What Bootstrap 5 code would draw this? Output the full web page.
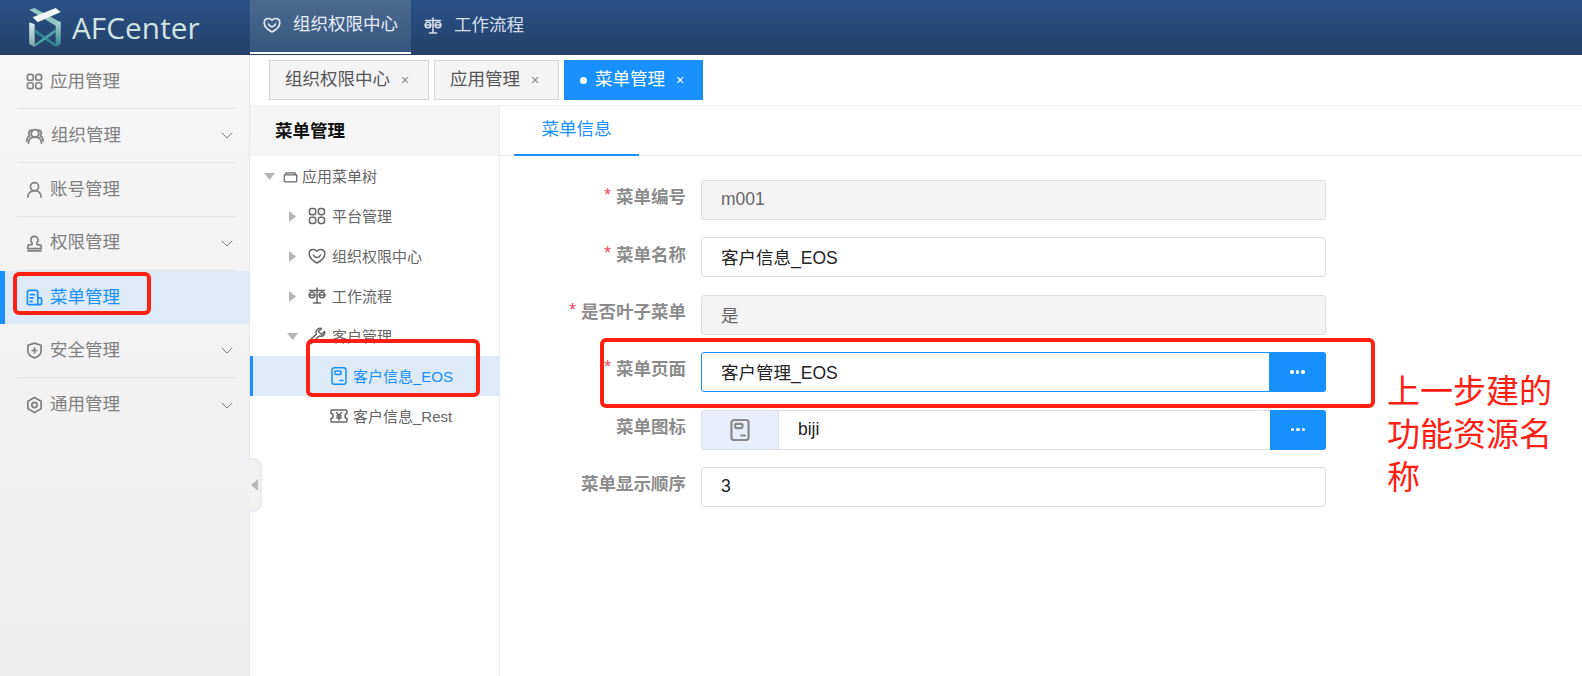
<!DOCTYPE html>
<html lang="zh">
<head>
<meta charset="utf-8">
<title>AFCenter</title>
<link rel="stylesheet" href="https://cdn.jsdelivr.net/npm/bootstrap@5.3.0/dist/css/bootstrap.min.css">
<style>
html,body{height:100%;overflow:hidden}
body{font-family:"Liberation Sans","Noto Sans CJK SC",sans-serif;background:#fff;color:#666}
.af-shell{height:676px;position:relative;overflow:hidden}
.af-top{height:55px;background:linear-gradient(180deg,#2a5289 0%,#254068 100%);color:#d6dfea;flex:none;font-size:17.5px}
.af-brand{width:250px;padding-left:29px;gap:11px;flex:none;height:55px}
.af-brandname{font-family:"Open Sans",sans-serif;font-size:29.7px;color:#d2e4e2;letter-spacing:.1px;line-height:1}
.af-topitem{height:54px;padding:0 13px;gap:12px;color:#d6dfea;text-decoration:none;line-height:1}
.af-topitem.active{width:161px;background:linear-gradient(180deg,#4d6a90,#365781);border-bottom:2px solid #fff;color:#e8eef5;justify-content:center;padding:0 0 3px}
.af-topitem.second{padding:0 0 3px 13px}
.af-main{flex:1;min-height:0}
.af-side{width:250px;flex:none;background:linear-gradient(180deg,#f6f6f6 0%,#eeeeee 100%);border-right:1px solid #e6e6e6;position:relative;padding-top:.4px}
.af-sideitem{height:53.8px;margin:0 13px 0 17px;border-bottom:1px solid #e3e3e3;color:#808080;font-size:17.5px;gap:7px;padding-left:9px;padding-right:3px;line-height:1}
.af-sideitem.last{border-bottom:0}
.af-sideitem.hit{margin:0;padding-left:26px;background:#deeaf7;color:#1890ff;box-shadow:inset 5px 0 0 #1890ff;border-bottom:0}
.af-sideitem .af-chev{margin-left:auto}
.af-work{flex:1;min-width:0}
.af-tabs{height:51px;flex:none;padding:5px 0 0 19px;gap:5px;border-bottom:1px solid #eef0f4}
.af-tab{height:40px;background:#f4f4f5;border:1px solid #d4d6e0;color:#555;font-size:17.5px;padding:0 20px 0 15px;gap:11px;line-height:1}
.af-tab.on{background:#1890ff;border-color:#1890ff;color:#fff;padding-right:19px}
.af-x{font-size:14px;color:#888;line-height:1;width:7px;display:block;text-align:center}
.af-tab.on .af-x{color:#fff}
.af-dot{width:7px;height:7px;background:#fff;border-radius:50%;margin-right:-3px}
.af-panels{flex:1;min-height:0}
.af-tree{width:250px;flex:none;border-right:1px solid #e9ecf2;position:relative;font-size:15px;color:#666}
.af-tree .af-ico{stroke-width:1.5}
.af-treehead{height:50px;background:#f5f5f5;color:#111;font-weight:700;font-size:17.5px;padding-left:25px}
.af-node{height:40px;gap:4px;line-height:1}
.af-l0{padding-left:12px}
.af-l1{padding-left:35px;gap:6px}
.af-l2{padding-left:80px;gap:5px}
.af-node.sel{background:#deeaf7;color:#1890ff;box-shadow:inset 3px 0 0 #1890ff}
.af-arrow{width:14px;display:flex;justify-content:center;flex:none;margin-right:3px}
.af-right{flex:1;min-width:0}
.af-righthead{height:50px;border-bottom:1px solid #e6e9f0;padding-left:14px;flex:none}
.af-righttab{width:125px;height:50px;border-bottom:2px solid #1890ff;color:#1890ff;font-size:17.5px;line-height:1;padding-bottom:1px}
.af-form{padding-top:24px;width:830px}
.af-row{height:40px;margin-bottom:17.4px}
.af-label{width:201px;flex:none;padding:0 15px 4px 0;text-align:right;font-weight:700;color:#8c8c8c;font-size:17.5px;line-height:1;align-self:center}
.af-label i{font-style:normal;color:#f5455c;font-weight:400;margin-right:5px;position:relative;top:-2px}
.af-field{width:625px;flex:none}
.af-field .form-control{height:40px;border-radius:3px;border:1px solid #dcdfe6;padding:0 19px 1px;font-size:17.5px;color:#222;box-shadow:none}
.af-field .form-control[readonly]{background:#f4f4f5;color:#666}
.af-field .form-control.focused{border-color:#1890ff}
.af-more{width:57px;flex:none;background:#1890ff;border:0;border-radius:0 3px 3px 0;color:#fff;padding:0;gap:2px}
.af-more.thin{width:56px}
.af-more span{width:3.5px;height:3.5px;border-radius:50%;background:#fff;display:block}
.af-prefix{width:78px;flex:none;background:#e8eefb;border:1px solid #dcdfe6;border-radius:3px 0 0 3px;color:#8a8a8a}
.af-handle{position:absolute;left:249px;top:458px;width:13px;height:54px;background:#f2f2f2;border:2px solid #e8ebf1;border-left:0;border-radius:0 9px 9px 0;z-index:2}
.af-handle::after{content:"";position:absolute;left:2px;top:19px;border:6.5px solid transparent;border-right:7px solid #b8b8b8;border-left:0}
.af-box{position:absolute;border:4px solid #ff2014;border-radius:6px;z-index:3;pointer-events:none}
.af-box1{left:13px;top:272px;width:138px;height:43px}
.af-box2{left:306px;top:339px;width:174px;height:58px}
.af-box3{left:600px;top:338px;width:775px;height:70px}
.af-note{position:absolute;left:1387px;top:370px;width:170px;color:#ff2014;font-size:33px;line-height:43px;z-index:3;margin:0}
svg{flex:none}
.af-ico{fill:none;stroke:currentColor;stroke-width:1.8;stroke-linecap:round;stroke-linejoin:round}
.af-top .af-ico{stroke-width:1.6}
</style>
</head>
<body>
<svg width="0" height="0" class="position-absolute">
  <defs>
    <symbol id="i-apps" viewBox="0 0 18 18"><rect x="1.500" y="1.500" width="6.200" height="6.200" rx="2.200"/><rect x="10.300" y="1.500" width="6.200" height="6.200" rx="2.600"/><rect x="1.500" y="10.300" width="6.200" height="6.200" rx="2.200"/><rect x="10.300" y="10.300" width="6.200" height="6.200" rx="2.200"/></symbol>
    <symbol id="i-team" viewBox="0 0 18 18"><circle cx="9" cy="6.500" r="3.800"/><path d="M2.500 16c0-3.500 2.600-6 6.500-6s6.500 2.500 6.500 6"/><path d="M5.500 3.200C3.500 3.500 2.500 5 2.800 7c.1.800.5 1.400 1 2-1.800.800-3 2.500-3 5M12.500 3.200c2 .3 3 1.800 2.700 3.800-.1.800-.5 1.400-1 2 1.800.800 3 2.500 3 5"/></symbol>
    <symbol id="i-user" viewBox="0 0 18 18"><circle cx="9" cy="6" r="4.300"/><path d="M2 17c0-4 3-6.800 7-6.800s7 2.800 7 6.800"/></symbol>
    <symbol id="i-stamp" viewBox="0 0 18 18"><path d="M9 1.500c-2.200 0-3.800 1.600-3.800 3.700 0 2 1.400 2.800 1.400 4.300 0 .8-.4 1-1.600 1H3.500c-1 0-1.700.7-1.700 1.700v2.300h14.400v-2.300c0-1-.7-1.700-1.700-1.700H13c-1.200 0-1.600-.2-1.600-1 0-1.500 1.400-2.300 1.400-4.300 0-2.100-1.600-3.700-3.800-3.700z"/><path d="M2 16.800h14"/></symbol>
    <symbol id="i-menu" viewBox="0 0 18 18"><path d="M12.500 16.500H3.200c-1 0-1.700-.7-1.700-1.700V3.200c0-1 .7-1.700 1.700-1.700h7.600c1 0 1.700.7 1.700 1.700z"/><path d="M12.500 9.500h2.300c1 0 1.700.7 1.700 1.700v3.300c0 1.100-.9 2-2 2h-2"/><path d="M4.500 6h4.500M4.500 9.500H7.500M4.500 13h2"/></symbol>
    <symbol id="i-shield" viewBox="0 0 18 18"><path d="M9 1.200l7 2.300v6c0 3.500-3 6-7 7.300-4-1.300-7-3.800-7-7.300v-6z"/><path d="M9 6.500v5M6.500 9h5"/></symbol>
    <symbol id="i-gear" viewBox="0 0 18 18"><path d="M9 1l7 4v8l-7 4-7-4V5z"/><circle cx="9" cy="9" r="2.800"/></symbol>
    <symbol id="i-heart" viewBox="0 0 18 18"><path d="M9 16C4 13.500 1.200 10.500 1.200 6.800 1.200 4 3.200 2.500 5.300 2.500c1.500 0 2.800.6 3.700 1.700.9-1.100 2.200-1.700 3.700-1.700 2.100 0 4.100 1.500 4.100 4.300C16.800 10.500 14 13.500 9 16z"/><path d="M5.500 8c.8 1.800 2 2.600 3.500 2.600S11.700 9.800 12.500 8"/></symbol>
    <symbol id="i-scale" viewBox="0 0 18 18"><path d="M1.500 3.500h15M9 1v14.500M5.500 16h7"/><path d="M1.200 8h5.600a2.800 2.800 0 0 1-5.600 0zM11.200 8h5.600a2.800 2.800 0 0 1-5.600 0z"/><path d="M1.200 8C1.200 6.500 2.500 5 4 5s2.800 1.500 2.800 3M11.200 8c0-1.500 1.300-3 2.800-3s2.800 1.500 2.800 3"/></symbol>
    <symbol id="i-folder" viewBox="0 0 18 18"><path d="M1.500 7h15v7.500c0 .6-.4 1-1 1h-13c-.6 0-1-.4-1-1zM3.500 7V4.500h11V7"/></symbol>
    <symbol id="i-wrench" viewBox="0 0 18 18"><path d="M16.500 4.500l-3 3-3-3 3-3c-2.500-.8-5.500.9-5.500 3.800 0 .7.100 1.300.4 1.800L1.500 13.500c-.7.700-.7 1.700 0 2.400s1.700.7 2.400 0l7.400-6.900c.5.200 1.100.3 1.700.3 2.700 0 4.200-2.500 3.500-4.800z"/></symbol>
    <symbol id="i-note" viewBox="0 0 18 18"><rect x="2" y=".8" width="14" height="16.400" rx="2.300"/><rect x="5" y="4" width="6" height="3.400" rx=".8"/><path d="M10 13.500h3"/></symbol>
    <symbol id="i-yen" viewBox="0 0 18 18"><path d="M2 3h14c.5 0 1 .4 1 1v2.500c-1.200 0-2 1-2 2.500s.8 2.500 2 2.500V14c0 .6-.5 1-1 1H2c-.5 0-1-.4-1-1v-2.500c1.200 0 2-1 2-2.500S2.200 6.500 1 6.500V4c0-.6.5-1 1-1z"/><path d="M6.500 5.500L9 8.500l2.500-3M9 8.500V13M6.800 9h4.400M6.800 11h4.400"/></symbol>
    <linearGradient id="lg1" x1="0" y1="0" x2="0" y2="1"><stop offset="0" stop-color="#dcefe9"/><stop offset="1" stop-color="#7fa9ad"/></linearGradient>
    <linearGradient id="lg2" x1="0" y1="0" x2="0" y2="1"><stop offset="0" stop-color="#a8d8d0"/><stop offset="1" stop-color="#2f7f8d"/></linearGradient>
  </defs>
</svg>
<div class="af-shell d-flex flex-column">
  <header class="af-top d-flex">
    <div class="af-brand d-flex align-items-center">
      <svg width="32" height="39" viewBox="0 0 93 115">
        <path d="M0 5L15 0 93 42 78 52z" fill="#8fc9c2"/>
        <path d="M0 42l16 6v67L0 106z" fill="url(#lg1)"/>
        <path d="M78 46l15-6v66l-15 9z" fill="url(#lg2)"/>
        <path d="M16 62l62 44v9L16 72z" fill="#2f8794"/>
        <path d="M78 62L16 106v9L78 72z" fill="#4aa0a3"/>
        <path d="M10 27L78 0l15 12-68 30z" fill="#eef7f5"/>
      </svg>
      <span class="af-brandname">AFCenter</span>
    </div>
    <nav class="nav flex-nowrap align-items-start">
      <a class="af-topitem active d-flex align-items-center" href="#"><svg class="af-ico" width="18" height="18"><use href="#i-heart"/></svg><span>组织权限中心</span></a>
      <a class="af-topitem second d-flex align-items-center" href="#"><svg class="af-ico" width="18" height="18"><use href="#i-scale"/></svg><span>工作流程</span></a>
    </nav>
  </header>
  <div class="af-main d-flex">
    <aside class="af-side">
      <div class="af-sideitem d-flex align-items-center"><svg class="af-ico" width="17" height="17"><use href="#i-apps"/></svg><span>应用管理</span></div>
      <div class="af-sideitem d-flex align-items-center"><svg class="af-ico" width="18" height="18"><use href="#i-team"/></svg><span>组织管理</span><svg class="af-chev af-ico" width="12" height="7" viewBox="0 0 12 7"><path d="M1 1l5 5 5-5" stroke-width="1"/></svg></div>
      <div class="af-sideitem d-flex align-items-center"><svg class="af-ico" width="17" height="17"><use href="#i-user"/></svg><span>账号管理</span></div>
      <div class="af-sideitem d-flex align-items-center"><svg class="af-ico" width="17" height="17"><use href="#i-stamp"/></svg><span>权限管理</span><svg class="af-chev af-ico" width="12" height="7" viewBox="0 0 12 7"><path d="M1 1l5 5 5-5" stroke-width="1"/></svg></div>
      <div class="af-sideitem hit d-flex align-items-center"><svg class="af-ico" width="17" height="17"><use href="#i-menu"/></svg><span>菜单管理</span></div>
      <div class="af-sideitem d-flex align-items-center"><svg class="af-ico" width="17" height="17"><use href="#i-shield"/></svg><span>安全管理</span><svg class="af-chev af-ico" width="12" height="7" viewBox="0 0 12 7"><path d="M1 1l5 5 5-5" stroke-width="1"/></svg></div>
      <div class="af-sideitem last d-flex align-items-center"><svg class="af-ico" width="17" height="18"><use href="#i-gear"/></svg><span>通用管理</span><svg class="af-chev af-ico" width="12" height="7" viewBox="0 0 12 7"><path d="M1 1l5 5 5-5" stroke-width="1"/></svg></div>
    </aside>
    <div class="af-work d-flex flex-column">
      <div class="af-tabs d-flex align-items-start">
        <div class="af-tab d-flex align-items-center"><span>组织权限中心</span><span class="af-x">×</span></div>
        <div class="af-tab d-flex align-items-center"><span>应用管理</span><span class="af-x">×</span></div>
        <div class="af-tab on d-flex align-items-center"><span class="af-dot"></span><span>菜单管理</span><span class="af-x">×</span></div>
      </div>
      <div class="af-panels d-flex">
        <section class="af-tree">
          <div class="af-treehead d-flex align-items-center">菜单管理</div>
          <div>
            <div class="af-node af-l0 d-flex align-items-center"><span class="af-arrow"><svg width="11" height="7"><path d="M0 0h11L5.500 7z" fill="#b5b5b5"/></svg></span><svg class="af-ico" width="15" height="15"><use href="#i-folder"/></svg><span>应用菜单树</span></div>
            <div class="af-node af-l1 d-flex align-items-center"><span class="af-arrow"><svg width="7" height="11"><path d="M0 0v11l7-5.500z" fill="#b5b5b5"/></svg></span><svg class="af-ico" width="18" height="18"><use href="#i-apps"/></svg><span>平台管理</span></div>
            <div class="af-node af-l1 d-flex align-items-center"><span class="af-arrow"><svg width="7" height="11"><path d="M0 0v11l7-5.500z" fill="#b5b5b5"/></svg></span><svg class="af-ico" width="18" height="18"><use href="#i-heart"/></svg><span>组织权限中心</span></div>
            <div class="af-node af-l1 d-flex align-items-center"><span class="af-arrow"><svg width="7" height="11"><path d="M0 0v11l7-5.500z" fill="#b5b5b5"/></svg></span><svg class="af-ico" width="18" height="18"><use href="#i-scale"/></svg><span>工作流程</span></div>
            <div class="af-node af-l1 d-flex align-items-center"><span class="af-arrow"><svg width="11" height="7"><path d="M0 0h11L5.500 7z" fill="#b5b5b5"/></svg></span><svg class="af-ico" width="18" height="18"><use href="#i-wrench"/></svg><span>客户管理</span></div>
            <div class="af-node af-l2 sel d-flex align-items-center"><svg class="af-ico" width="18" height="18"><use href="#i-note"/></svg><span>客户信息_EOS</span></div>
            <div class="af-node af-l2 d-flex align-items-center"><svg class="af-ico" width="18" height="18"><use href="#i-yen"/></svg><span>客户信息_Rest</span></div>
          </div>
        </section>
        <section class="af-right d-flex flex-column">
          <div class="af-righthead d-flex"><div class="af-righttab d-flex align-items-center justify-content-center">菜单信息</div></div>
          <form class="af-form">
            <div class="af-row d-flex"><div class="af-label"><i>*</i>菜单编号</div><div class="af-field"><input class="form-control" readonly value="m001"></div></div>
            <div class="af-row d-flex"><div class="af-label"><i>*</i>菜单名称</div><div class="af-field"><input class="form-control" value="客户信息_EOS"></div></div>
            <div class="af-row d-flex"><div class="af-label"><i>*</i>是否叶子菜单</div><div class="af-field"><input class="form-control" readonly value="是"></div></div>
            <div class="af-row d-flex"><div class="af-label"><i>*</i>菜单页面</div><div class="af-field input-group flex-nowrap"><input class="form-control focused" value="客户管理_EOS"><button type="button" class="af-more btn d-flex align-items-center justify-content-center"><span></span><span></span><span></span></button></div></div>
            <div class="af-row d-flex"><div class="af-label">菜单图标</div><div class="af-field input-group flex-nowrap"><span class="af-prefix d-flex align-items-center justify-content-center"><svg class="af-ico" width="22" height="22"><use href="#i-note"/></svg></span><input class="form-control" value="biji"><button type="button" class="af-more thin btn d-flex align-items-center justify-content-center"><span></span><span></span><span></span></button></div></div>
            <div class="af-row d-flex"><div class="af-label">菜单显示顺序</div><div class="af-field"><input class="form-control" value="3"></div></div>
          </form>
        </section>
      </div>
    </div>
  </div>
  <div class="af-handle"></div>
  <div class="af-box af-box1"></div>
  <div class="af-box af-box2"></div>
  <div class="af-box af-box3"></div>
  <p class="af-note">上一步建的功能资源名称</p>
</div>
<script src="https://cdn.jsdelivr.net/npm/bootstrap@5.3.0/dist/js/bootstrap.bundle.min.js"></script>
</body>
</html>
